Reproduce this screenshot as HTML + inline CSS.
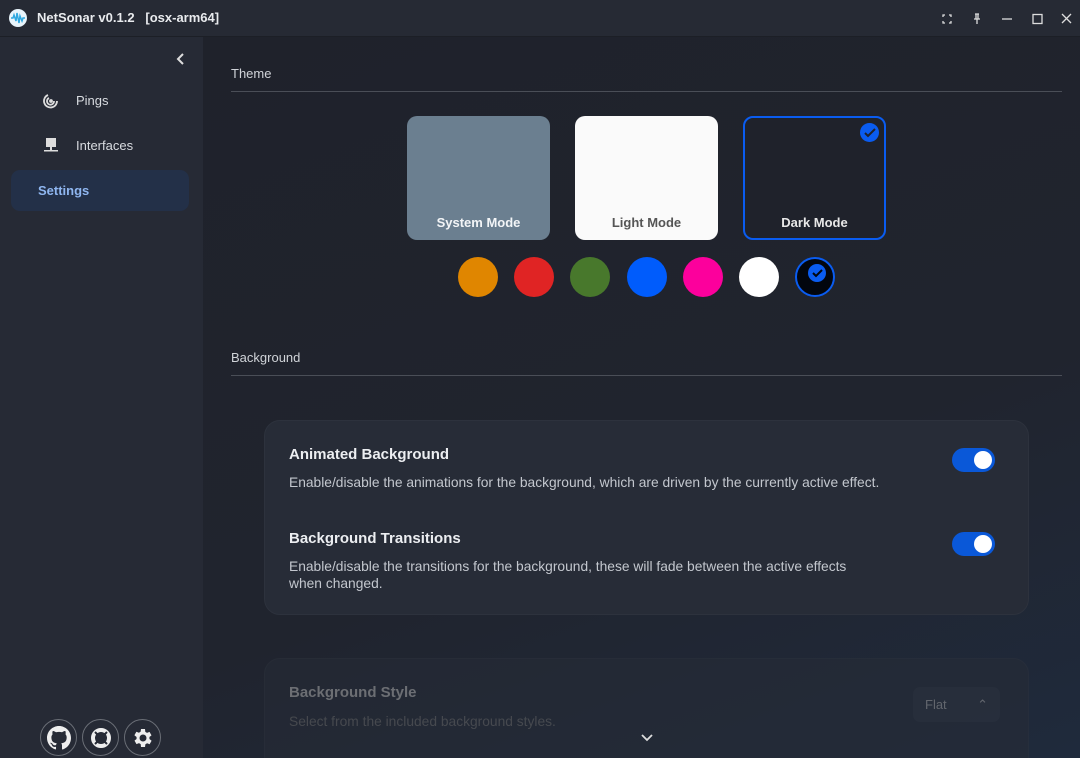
<!DOCTYPE html>
<html><head><style>
*{margin:0;padding:0;box-sizing:border-box}
html,body{width:1080px;height:758px;overflow:hidden}
body{background:#1f232d;font-family:"Liberation Sans",sans-serif;color:#e6e8ec;position:relative}
.title{position:absolute;left:0;top:0;width:1080px;height:37px;background:#262a34;border-bottom:1px solid #1c1f26}
.side{position:absolute;left:0;top:37px;width:203px;height:721px;background:#262a35}
.main{position:absolute;left:203px;top:37px;width:877px;height:721px;overflow:hidden;background:linear-gradient(160deg,#1f222b 0%,#20242e 60%,#1f2a3c 100%)}
.abs{position:absolute}
.sec{position:absolute;left:28px;width:831px;border-bottom:1px solid #4a4e57;font-size:13px;color:#d0d3d8;padding-bottom:10px}
.card{position:absolute;width:143px;height:124px;border-radius:10px;font-size:13px;text-align:center;padding-top:99px;font-weight:bold}
.dot{position:absolute;width:40px;height:40px;border-radius:50%}
.panel{position:absolute;left:61px;width:765px;background:#272c37;border-radius:16px;border:1px solid #2d323d}
.tog{position:absolute;width:43px;height:24px;border-radius:12px;background:#0a58d8}
.tog:after{content:"";position:absolute;right:3px;top:3px;width:18px;height:18px;border-radius:50%;background:#fff}
.h{font-size:15px;font-weight:bold;color:#eceef1}
.d{font-size:13.8px;color:#c3c7ce;line-height:17px}
.ib{position:absolute;top:719px;width:37px;height:37px;border-radius:50%;border:1px solid #6a6e76;display:flex;align-items:center;justify-content:center}
</style></head><body>
<div class="title">
 <div class="abs" style="left:9px;top:9px;width:18px;height:18px;border-radius:50%;background:#e8f4fb"></div>
 <svg class="abs" style="left:10px;top:12px" width="16" height="12"><path d="M1 6h2l1-3 2 6 1-8 2 10 1-7 2 5 1-3h2" stroke="#2ea8e0" stroke-width="1.5" fill="none"/></svg>
 <div class="abs" style="left:37px;top:10px;font-size:13px;font-weight:bold;color:#e9ebee">NetSonar v0.1.2 &nbsp; [osx-arm64]</div>
 <svg class="abs" style="left:940px;top:12px" width="140" height="14" stroke="#ddd" fill="none" stroke-width="1.3">
  <path d="M3 5V3h2M9 3h2v2M11 9v2H9M5 11H3V9"/>
  <path d="M35 2h4M36 2v5h2V2M34 7h6M37 7v5"/>
  <path d="M62 7h10"/>
  <rect x="93" y="2.5" width="9" height="9"/>
  <path d="M122 2l9 9M131 2l-9 9"/>
 </svg>
</div>
<div class="side">
 <svg class="abs" style="left:176px;top:15px" width="10" height="14"><path d="M7 2L2 7l5 5" stroke="#ddd" stroke-width="2" fill="none"/></svg>
 <svg class="abs" style="left:43px;top:56px" width="16" height="16" stroke="#ddd" fill="none" stroke-width="1.8"><path d="M5 2A6.5 6.5 0 1 0 14 8"/><path d="M6 5A3.5 3.5 0 1 0 11 8"/><circle cx="8" cy="8" r="1" fill="#ddd"/></svg>
 <div class="abs" style="left:76px;top:56px;font-size:13px;color:#d8dbe0">Pings</div>
 <svg class="abs" style="left:43px;top:100px" width="16" height="16"><rect x="3" y="1" width="10" height="9" fill="#ddd"/><rect x="7" y="10" width="2" height="3" fill="#ddd"/><rect x="1" y="13" width="14" height="1.5" fill="#ddd"/></svg>
 <div class="abs" style="left:76px;top:101px;font-size:13px;color:#d8dbe0">Interfaces</div>
 <div class="abs" style="left:11px;top:133px;width:178px;height:41px;border-radius:9px;background:#233048"></div>
 <div class="abs" style="left:38px;top:146px;font-size:13px;font-weight:bold;color:#8fb6f0">Settings</div>
</div>
<div class="ib" style="left:40px"><svg width="24" height="24" viewBox="0 0 16 16"><path fill="#eee" d="M8 0C3.58 0 0 3.58 0 8c0 3.54 2.29 6.530 5.47 7.59.4.07.55-.17.55-.38v-1.34c-2.23.48-2.7-1.07-2.7-1.07-.36-.92-.89-1.170-.89-1.17-.73-.5.06-.49.06-.49.8.06 1.23.83 1.23.83.72 1.23 1.88.87 2.34.67.07-.52.28-.87.51-1.070-1.78-.2-3.65-.89-3.650-3.95 0-.87.31-1.59.82-2.15-.08-.2-.36-1.02.08-2.12 0 0 .67-.21 2.2.82a7.6 7.6 0 0 1 4 0c1.53-1.04 2.2-.82 2.2-.82.44 1.1.16 1.92.08 2.12.51.56.82 1.27.82 2.15 0 3.07-1.87 3.75-3.65 3.95.29.25.54.73.54 1.48v2.2c0 .21.15.46.55.38A8 8 0 0 0 16 8c0-4.42-3.58-8-8-8z"/></svg></div>
<div class="ib" style="left:82px"><svg width="24" height="24"><circle cx="12" cy="12" r="8" stroke="#eee" stroke-width="4" fill="none"/><path d="M6 6l3 3M18 6l-3 3M6 18l3-3M18 18l-3-3" stroke="#262a35" stroke-width="2"/></svg></div>
<div class="ib" style="left:124px"><svg width="24" height="24" viewBox="0 0 24 24"><path fill="#eee" d="M19.4 13a7.5 7.5 0 0 0 0-2l2.1-1.6-2-3.5-2.5 1a7 7 0 0 0-1.7-1L15 3h-4l-.4 2.7a7 7 0 0 0-1.7 1l-2.5-1-2 3.5L6.6 11a7.5 7.5 0 0 0 0 2l-2.1 1.6 2 3.5 2.5-1a7 7 0 0 0 1.7 1L11 21h4l.4-2.7a7 7 0 0 0 1.7-1l2.5 1 2-3.5zM13 15.5a3.5 3.5 0 1 1 0-7 3.5 3.5 0 0 1 0 7z" transform="translate(-1 0)"/></svg></div>
<div class="main">
 <div class="sec" style="top:29px">Theme</div>
 <div class="card" style="left:204px;top:79px;background:#6b7f90;color:#f3f5f7">System Mode</div>
 <div class="card" style="left:372px;top:79px;background:#fafafa;color:#555">Light Mode</div>
 <div class="card" style="left:540px;top:79px;background:#1f222b;border:2px solid #0a5cf0;padding-top:97px;color:#e8e8e8">Dark Mode</div>
 <div class="abs" style="left:657px;top:86px;width:19px;height:19px;border-radius:50%;background:#0a5cf0"></div>
 <svg class="abs" style="left:661px;top:91px" width="12" height="10"><path d="M1 5l3 3 7-7" stroke="#1f222b" stroke-width="2" fill="none"/></svg>
 <div class="dot" style="left:255px;top:220px;background:#e08600"></div>
 <div class="dot" style="left:311px;top:220px;background:#e02424"></div>
 <div class="dot" style="left:367px;top:220px;background:#48782c"></div>
 <div class="dot" style="left:424px;top:220px;background:#005cfc"></div>
 <div class="dot" style="left:480px;top:220px;background:#fc009c"></div>
 <div class="dot" style="left:536px;top:220px;background:#fff"></div>
 <div class="dot" style="left:592px;top:220px;background:#02060e;border:2px solid #0a5cf0"></div>
 <div class="abs" style="left:605px;top:227px;width:18px;height:18px;border-radius:50%;background:#0a5cf0"></div>
 <svg class="abs" style="left:609px;top:232px" width="11" height="9"><path d="M1 4l3 3 6-6" stroke="#02060e" stroke-width="2" fill="none"/></svg>
 <div class="sec" style="top:313px">Background</div>
 <div class="panel" style="top:383px;height:195px">
  <div class="abs h" style="left:24px;top:25px">Animated Background</div>
  <div class="abs d" style="left:24px;top:53px">Enable/disable the animations for the background, which are driven by the currently active effect.</div>
  <div class="tog" style="left:687px;top:27px"></div>
  <div class="abs h" style="left:24px;top:109px">Background Transitions</div>
  <div class="abs d" style="left:24px;top:137px;width:565px">Enable/disable the transitions for the background, these will fade between the active effects when changed.</div>
  <div class="tog" style="left:687px;top:111px"></div>
 </div>
 <div class="panel" style="top:621px;height:120px;opacity:.55">
  <div class="abs h" style="left:24px;top:25px;color:#aaa">Background Style</div>
  <div class="abs d" style="left:24px;top:54px;color:#666">Select from the included background styles.</div>
  <div class="abs" style="left:648px;top:28px;width:87px;height:35px;border-radius:7px;background:#2e333e;font-size:13px;color:#999;padding:10px 12px">Flat<span style="float:right">⌃</span></div>
 </div>
 <svg class="abs" style="left:438px;top:697px" width="12" height="8"><path d="M1 1l5 5 5-5" stroke="#ddd" stroke-width="1.8" fill="none"/></svg>
</div>
</body></html>
